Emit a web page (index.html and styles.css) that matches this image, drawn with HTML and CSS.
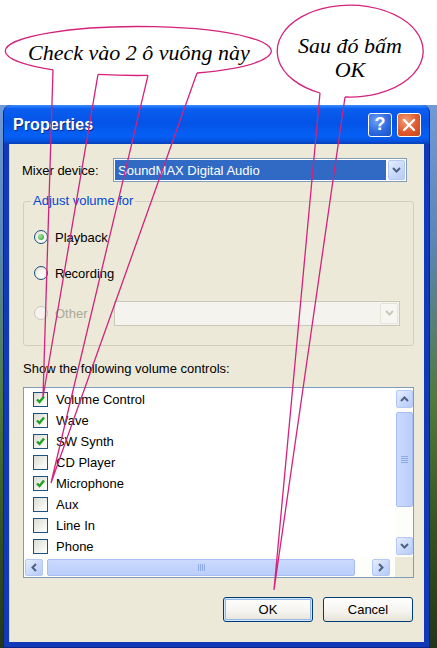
FILE: index.html
```html
<!DOCTYPE html>
<html lang="vi">
<head>
    <meta charset="UTF-8">
    <meta name="viewport" content="width=device-width, initial-scale=1.0">
    <title>Properties</title>
    <link rel="stylesheet" href="styles.css">
</head>
<body>
    <div class="top-space"></div>

    <div class="desktop">
        <div class="window">
            <div class="titlebar">
                <span class="title">Properties</span>
                <span class="tb-btn help">?</span>
                <span class="tb-btn close">
                    <svg width="14" height="14" viewBox="0 0 14 14"><path d="M2 2 L12 12 M12 2 L2 12" stroke="#fff" stroke-width="2.4" stroke-linecap="round"/></svg>
                </span>
            </div>

            <div class="client">
                <div class="mixer-row">
                    <span class="mixer-label">Mixer device:</span>
                    <div class="combo">
                        <span class="combo-value">SoundMAX Digital Audio</span>
                        <span class="sbtn">
                            <svg width="9" height="6" viewBox="0 0 9 6"><polyline points="1,1 4.5,4.5 8,1" fill="none" stroke="#4d6185" stroke-width="2"/></svg>
                        </span>
                    </div>
                </div>

                <fieldset class="group">
                    <legend>Adjust volume for</legend>
                    <div class="radio-row">
                        <span class="radio checked"></span>
                        <span>Playback</span>
                    </div>
                    <div class="radio-row second">
                        <span class="radio"></span>
                        <span>Recording</span>
                    </div>
                    <div class="radio-row third disabled">
                        <span class="radio"></span>
                        <span>Other</span>
                        <div class="combo combo-off">
                            <span class="sbtn sbtn-off">
                                <svg width="9" height="6" viewBox="0 0 9 6"><polyline points="1,1 4.5,4.5 8,1" fill="none" stroke="#c9c7ba" stroke-width="2"/></svg>
                            </span>
                        </div>
                    </div>
                </fieldset>

                <div class="list-label">Show the following volume controls:</div>

                <div class="listbox">
                    <ul class="items">
                        <li><span class="check on"><svg width="11" height="11" viewBox="0 0 11 11"><polyline points="2,5.5 4.5,8 9,2.5" fill="none" stroke="#21a121" stroke-width="2.4"/></svg></span>Volume Control</li>
                        <li><span class="check on"><svg width="11" height="11" viewBox="0 0 11 11"><polyline points="2,5.5 4.5,8 9,2.5" fill="none" stroke="#21a121" stroke-width="2.4"/></svg></span>Wave</li>
                        <li><span class="check on"><svg width="11" height="11" viewBox="0 0 11 11"><polyline points="2,5.5 4.5,8 9,2.5" fill="none" stroke="#21a121" stroke-width="2.4"/></svg></span>SW Synth</li>
                        <li><span class="check"></span>CD Player</li>
                        <li><span class="check on"><svg width="11" height="11" viewBox="0 0 11 11"><polyline points="2,5.5 4.5,8 9,2.5" fill="none" stroke="#21a121" stroke-width="2.4"/></svg></span>Microphone</li>
                        <li><span class="check"></span>Aux</li>
                        <li><span class="check"></span>Line In</li>
                        <li><span class="check"></span>Phone</li>
                    </ul>

                    <div class="vscroll">
                        <span class="sbtn sq">
                            <svg width="9" height="6" viewBox="0 0 9 6"><polyline points="1,5 4.5,1.5 8,5" fill="none" stroke="#4d6185" stroke-width="2"/></svg>
                        </span>
                        <span class="thumb v-thumb"></span>
                        <span class="track"></span>
                        <span class="sbtn sq">
                            <svg width="9" height="6" viewBox="0 0 9 6"><polyline points="1,1 4.5,4.5 8,1" fill="none" stroke="#4d6185" stroke-width="2"/></svg>
                        </span>
                    </div>

                    <div class="hscroll">
                        <span class="sbtn sq">
                            <svg width="6" height="9" viewBox="0 0 6 9"><polyline points="5,1 1.5,4.5 5,8" fill="none" stroke="#4d6185" stroke-width="2"/></svg>
                        </span>
                        <span class="thumb h-thumb"></span>
                        <span class="track"></span>
                        <span class="sbtn sq">
                            <svg width="6" height="9" viewBox="0 0 6 9"><polyline points="1,1 4.5,4.5 1,8" fill="none" stroke="#4d6185" stroke-width="2"/></svg>
                        </span>
                    </div>
                    <div class="corner"></div>
                </div>

                <div class="buttons">
                    <button class="btn default">OK</button>
                    <button class="btn">Cancel</button>
                </div>
            </div>
        </div>
    </div>

    <!-- chú thích -->
    <svg class="callouts" width="437" height="648" viewBox="0 0 437 648">
        <ellipse cx="138" cy="51" rx="133" ry="24.5" fill="#fff"/>
        <ellipse cx="350" cy="51" rx="73" ry="46" fill="#fff"/>
        <g fill="none" stroke="#d3237c" stroke-width="1.3">
            <path d="M98 74.4 A133 24.5 0 0 0 148 75.4"/>
            <path d="M197 73 A133 24.5 0 1 0 53 69.8"/>
            <path d="M53 69.8 L43 397 L98 74.4"/>
            <path d="M148 75.4 L51 483 L197 73"/>
            <path d="M345 97 A73 46 0 1 0 320 93"/>
            <path d="M320 93 L274 590 L345 97"/>
        </g>
        <text x="139" y="60" class="note">Check vào 2 ô vuông này</text>
        <text x="350" y="53" class="note">Sau đó bấm</text>
        <text x="350" y="77" class="note">OK</text>
    </svg>
</body>
</html>
```

FILE: styles.css
```css
* {
    margin: 0;
    padding: 0;
    box-sizing: border-box;
}

body {
    width: 437px;
    height: 648px;
    overflow: hidden;
    position: relative;
    background: #fff;
    font-family: "Liberation Sans", Arial, sans-serif;
    font-size: 13px;
    color: #000;
}

.top-space {
    height: 105px;
}

/* Nền desktop sau cửa sổ */
.desktop {
    height: 543px;
    padding: 0 7px 0 3px;
    background: linear-gradient(to bottom, #6f9ad6 0%, #5b86b8 25%, #4f7a3a 55%, #33501f 80%, #22361a 100%);
}

.window {
    height: 543px;
    display: flex;
    flex-direction: column;
    background: #1239b8;
    border-radius: 8px 8px 0 0;
    border-left: 1px solid #0a2488;
    border-right: 1px solid #0a2488;
    border-bottom: 1px solid #0a2488;
}

/* Thanh tiêu đề */
.titlebar {
    height: 39px;
    flex: none;
    display: flex;
    align-items: center;
    gap: 5px;
    padding: 0 8px 0 9px;
    border-radius: 7px 7px 0 0;
    background: linear-gradient(to bottom, #3c8dfb 0%, #0a5ef0 10%, #0453e6 45%, #0660f6 80%, #0552dd 92%, #0840b8 100%);
}

.title {
    flex: 1;
    color: #fff;
    font-size: 16px;
    font-weight: bold;
    text-shadow: 1px 1px 0 #0b2a80;
    letter-spacing: 0.1px;
}

.tb-btn {
    width: 24px;
    height: 24px;
    border: 1px solid #fff;
    border-radius: 3px;
    display: flex;
    align-items: center;
    justify-content: center;
    color: #fff;
    font-weight: bold;
    font-size: 18px;
}

.help {
    background: radial-gradient(circle at 35% 30%, #6fa0f8 0%, #2f6ae0 55%, #1a4fc4 100%);
}

.close {
    background: radial-gradient(circle at 35% 30%, #f2a07a 0%, #e0592c 55%, #c8451c 100%);
}

/* Vùng nội dung */
.client {
    flex: 1;
    margin: 0 5px 5px;
    background: #ece9d8;
    border-left: 1px solid #c9d6f2;
    padding-top: 14px;
    display: flex;
    flex-direction: column;
}

.mixer-row {
    display: flex;
    align-items: center;
    height: 24px;
    padding-left: 12px;
}

.mixer-label {
    width: 91px;
}

.combo {
    width: 294px;
    height: 24px;
    border: 1px solid #7f9db9;
    background: #fff;
    display: flex;
    align-items: center;
    padding: 1px;
}

.combo-value {
    flex: 1;
    height: 100%;
    background: #316ac5;
    color: #fff;
    padding-left: 3px;
    display: flex;
    align-items: center;
    margin-right: 2px;
}

.sbtn {
    width: 17px;
    height: 20px;
    border: 1px solid #b4c8f6;
    border-radius: 2px;
    background: linear-gradient(135deg, #e6eefe 0%, #c6d7fb 60%, #b6cbf7 100%);
    display: flex;
    align-items: center;
    justify-content: center;
    flex: none;
}

/* Nhóm Adjust volume for */
.group {
    margin: 12px 10px 0 13px;
    border: 1px solid #d0d0bf;
    border-radius: 3px;
    padding: 17px 13px 19px 10px;
}

.group legend {
    color: #0046d5;
    padding: 0 2px;
    margin-left: -3px;
    line-height: 14px;
}

.radio-row {
    display: flex;
    align-items: center;
    gap: 7px;
    height: 24px;
}

.radio-row.second {
    margin-top: 12px;
}

.radio-row.third {
    margin-top: 15px;
    height: 26px;
}

.radio {
    width: 14px;
    height: 14px;
    border: 1px solid #1c5180;
    border-radius: 50%;
    background: radial-gradient(circle at 60% 60%, #fff 0%, #f2f1ea 50%, #d8d6c9 100%);
    display: flex;
    align-items: center;
    justify-content: center;
}

.radio.checked::after {
    content: "";
    width: 6px;
    height: 6px;
    border-radius: 50%;
    background: radial-gradient(circle at 35% 35%, #a6e39d, #27a22a);
}

.disabled {
    color: #aca899;
}

.disabled .radio {
    border-color: #cac8bb;
    background: #f4f3ee;
}

.combo-off {
    margin-left: auto;
    width: 286px;
    height: 25px;
    border-color: #cac8bb;
    background: #f4f3ee;
    justify-content: flex-end;
}

.sbtn-off {
    width: 18px;
    height: 21px;
    border-color: #e6e4d9;
    background: #f7f6f1;
}

.list-label {
    margin: 16px 0 0 13px;
    line-height: 14px;
}

/* Danh sách */
.listbox {
    margin: 11px 10px 0 13px;
    height: 191px;
    border: 1px solid #7f9db9;
    background: #fff;
    display: grid;
    grid-template-columns: 1fr 18px;
    grid-template-rows: 169px 20px;
}

.items {
    list-style: none;
    padding: 1px 0 0 9px;
    overflow: hidden;
}

.items li {
    height: 21px;
    display: flex;
    align-items: center;
    gap: 8px;
}

.check {
    width: 15px;
    height: 15px;
    border: 1px solid #1c5180;
    background: linear-gradient(135deg, #dcdcd5 0%, #f6f6f2 70%, #fff 100%);
    display: flex;
    align-items: center;
    justify-content: center;
}

.vscroll {
    display: flex;
    flex-direction: column;
    align-items: center;
    padding: 2px 0;
    background: #fdfdfa;
}

.sq {
    width: 17px;
    height: 18px;
}

.thumb {
    border: 1px solid #a8bdf5;
    border-radius: 2px;
    background: linear-gradient(to right, #cbdafd, #b9cefa);
    display: flex;
    align-items: center;
    justify-content: center;
}

.v-thumb {
    width: 17px;
    height: 95px;
    margin-top: 4px;
}

.v-thumb::after {
    content: "";
    width: 7px;
    height: 7px;
    background: repeating-linear-gradient(to bottom, #8ea8e8 0 1px, transparent 1px 2px);
}

.h-thumb {
    width: 308px;
    height: 17px;
    margin-left: 4px;
    background: linear-gradient(to bottom, #cbdafd, #b9cefa);
}

.h-thumb::after {
    content: "";
    width: 7px;
    height: 7px;
    background: repeating-linear-gradient(to right, #8ea8e8 0 1px, transparent 1px 2px);
}

.track {
    flex: 1;
}

.hscroll {
    display: flex;
    align-items: center;
    padding: 0 5px 0 1px;
    background: #fdfdfa;
}

.hscroll .sq {
    width: 18px;
    height: 17px;
}

.corner {
    background: #ece9d8;
}

/* Nút */
.buttons {
    display: flex;
    justify-content: flex-end;
    gap: 10px;
    margin: 19px 11px 0 0;
}

.btn {
    width: 90px;
    height: 25px;
    font-family: "Liberation Sans", Arial, sans-serif;
    font-size: 13px;
    color: #000;
    border: 1px solid #003c74;
    border-radius: 3px;
    background: linear-gradient(to bottom, #fff 0%, #f4f3ee 60%, #e6e3d6 100%);
}

.btn.default {
    box-shadow: inset 0 0 0 1px #cee7ff, inset 0 0 0 2px #98b8ea;
}

/* Chú thích */
.callouts {
    position: absolute;
    top: 0;
    left: 0;
    pointer-events: none;
}

.note {
    font-family: "Liberation Serif", "Times New Roman", serif;
    font-style: italic;
    font-size: 22px;
    text-anchor: middle;
    fill: #000;
}
```
